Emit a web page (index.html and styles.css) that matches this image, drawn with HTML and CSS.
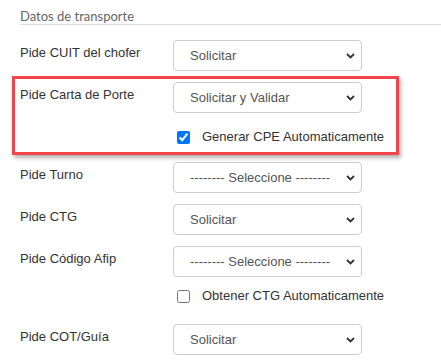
FILE: index.html
```html
<!DOCTYPE html>
<html lang="es">
<head>
    <meta charset="UTF-8">
    <title>Datos de transporte</title>
    <link rel="stylesheet" href="styles.css">
</head>
<body>
    <div class="panel">
        <div class="legend">Datos de transporte</div>

        <div class="row">
            <label class="label">Pide CUIT del chofer</label>
            <div class="select-wrap">
                <select><option>Solicitar</option></select>
                <svg class="chevron" width="9" height="6" viewBox="0 0 9 6"><path d="M1 1 L4.5 4.5 L8 1" fill="none" stroke="#333" stroke-width="1.8"/></svg>
            </div>
        </div>

        <div class="highlight">
            <div class="row">
                <label class="label">Pide Carta de Porte</label>
                <div class="select-wrap">
                    <select><option>Solicitar y Validar</option></select>
                    <svg class="chevron" width="9" height="6" viewBox="0 0 9 6"><path d="M1 1 L4.5 4.5 L8 1" fill="none" stroke="#333" stroke-width="1.8"/></svg>
                </div>
            </div>
            <label class="check">
                <input type="checkbox" checked>
                <span>Generar CPE Automaticamente</span>
            </label>
        </div>

        <div class="row">
            <label class="label">Pide Turno</label>
            <div class="select-wrap">
                <select><option>-------- Seleccione --------</option></select>
                <svg class="chevron" width="9" height="6" viewBox="0 0 9 6"><path d="M1 1 L4.5 4.5 L8 1" fill="none" stroke="#333" stroke-width="1.8"/></svg>
            </div>
        </div>

        <div class="row">
            <label class="label">Pide CTG</label>
            <div class="select-wrap">
                <select><option>Solicitar</option></select>
                <svg class="chevron" width="9" height="6" viewBox="0 0 9 6"><path d="M1 1 L4.5 4.5 L8 1" fill="none" stroke="#333" stroke-width="1.8"/></svg>
            </div>
        </div>

        <div class="row">
            <label class="label">Pide Código Afip</label>
            <div class="select-wrap">
                <select><option>-------- Seleccione --------</option></select>
                <svg class="chevron" width="9" height="6" viewBox="0 0 9 6"><path d="M1 1 L4.5 4.5 L8 1" fill="none" stroke="#333" stroke-width="1.8"/></svg>
            </div>
        </div>
        <label class="check check-plain">
            <input type="checkbox">
            <span>Obtener CTG Automaticamente</span>
        </label>

        <div class="row">
            <label class="label">Pide COT/Guía</label>
            <div class="select-wrap">
                <select><option>Solicitar</option></select>
                <svg class="chevron" width="9" height="6" viewBox="0 0 9 6"><path d="M1 1 L4.5 4.5 L8 1" fill="none" stroke="#333" stroke-width="1.8"/></svg>
            </div>
        </div>
    </div>
</body>
</html>
```

FILE: styles.css
```css
body {
    margin: 0;
    background-color: white;
    color: #333;
    font-family: "Liberation Sans", Arial, sans-serif;
    font-size: 13px;
}
.panel {
    padding: 8px 0 0 20px;
}
.legend {
    font-family: Lato, sans-serif;
    font-size: 13px;
    line-height: 16px;
    color: #666;
    border-bottom: 1px solid #ddd;
    margin-bottom: 15px;
}
.row {
    display: flex;
    align-items: flex-start;
    margin-bottom: 11px;
}
.label {
    width: 153px;
    padding-top: 3px;
    line-height: 20px;
}
.select-wrap {
    position: relative;
    width: 189px;
    height: 31px;
}
.select-wrap select {
    appearance: none;
    -webkit-appearance: none;
    width: 100%;
    height: 100%;
    margin: 0;
    padding: 0 20px 0 16px;
    border: 1px solid #ccc;
    border-radius: 4px;
    background-color: white;
    color: #555;
    font-family: "Liberation Sans", Arial, sans-serif;
    font-size: 13px;
}
.chevron {
    position: absolute;
    right: 7px;
    top: 13px;
}
.highlight {
    width: 376px;
    margin: -6px 0 0 -8px;
    padding: 3px 0 0 5px;
    border: 3px solid #f2454b;
    box-shadow: 2px 3px 4px rgba(0, 0, 0, 0.3);
}
.highlight .row {
    margin-bottom: 0;
}
.check {
    display: flex;
    align-items: center;
    margin: 16px 0 7px 157px;
    font-size: 13px;
    line-height: 16px;
}
.check input {
    width: 13px;
    height: 13px;
    margin: 0 12px 0 0;
}
.check-plain {
    margin: 6px 0 20px 157px;
}
.highlight + .row {
    margin-top: 7px;
}
```
